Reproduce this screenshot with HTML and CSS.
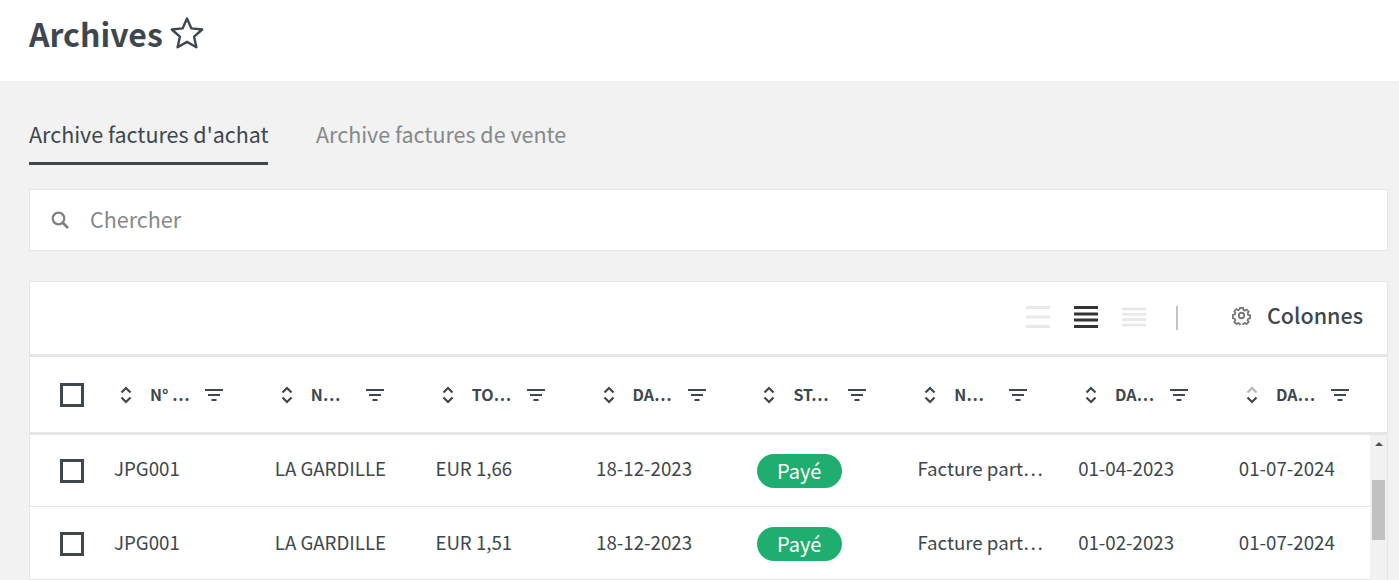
FILE: index.html
```html
<!DOCTYPE html>
<html lang="fr">
<head>
<meta charset="utf-8">
<title>Archives</title>
<link rel="stylesheet" href="styles.css">
</head>
<body>
<svg class="defs" width="0" height="0" aria-hidden="true">
  <symbol id="sort" viewBox="0 0 12 18"><path d="M1.500 6.500 6 2l4.500 4.500M1.500 11.500 6 16l4.500-4.500" fill="none" stroke="currentColor" stroke-width="2.200"/></symbol>
  <symbol id="sort-dim" viewBox="0 0 12 18"><path d="M1.500 6.500 6 2l4.500 4.500" fill="none" stroke="#b5b8ba" stroke-width="2.200"/><path d="M1.500 11.500 6 16l4.500-4.500" fill="none" stroke="currentColor" stroke-width="2.200"/></symbol>
  <symbol id="filter" viewBox="0 0 18 12"><path d="M0 1h18M3 6h12M6.500 11h5" fill="none" stroke="currentColor" stroke-width="2.200"/></symbol>
</svg>
<header class="page-head">
  <h1 class="title">Archives</h1>
  <svg class="star" viewBox="0 0 34 34"><path d="M17 2.500l4.400 9.900 10.800 1.100-8.100 7.200 2.300 10.600L17 25.900l-9.400 5.400 2.300-10.600-8.100-7.200 10.800-1.100z" fill="none" stroke="currentColor" stroke-width="2.400" stroke-linejoin="round"/></svg>
</header>
<main class="content">
  <nav class="tabs">
    <a class="tab tab-active">Archive factures d'achat</a>
    <a class="tab">Archive factures de vente</a>
  </nav>
  <div class="search">
    <svg class="search-icon" viewBox="0 0 18 18"><circle cx="7.500" cy="7.500" r="5.800" fill="none" stroke="currentColor" stroke-width="2.200"/><path d="M11.500 11.500 17 17" stroke="currentColor" stroke-width="2.600"/></svg>
    <span class="search-text">Chercher</span>
  </div>
  <section class="card">
    <div class="toolbar">
      <svg class="density density-off" viewBox="0 0 24 22"><path d="M0 1.500h24M0 11h24M0 20.500h24" stroke="currentColor" stroke-width="3"/></svg>
      <svg class="density density-on" viewBox="0 0 24 22"><path d="M0 1.500h24M0 8h24M0 14h24M0 20.500h24" stroke="currentColor" stroke-width="3"/></svg>
      <svg class="density density-off" viewBox="0 0 24 22"><path d="M0 3h24M0 8.300h24M0 13.600h24M0 19h24" stroke="currentColor" stroke-width="2.600"/></svg>
      <span class="tool-sep"></span>
      <svg class="gear" viewBox="0 0 18 18"><path d="M7.400 1h3.200l.4 2.200 1.500.7 1.900-1.200 2.200 2.300-1.200 1.800.7 1.600 2 .4v3.200l-2 .4-.7 1.500 1.200 1.900-2.200 2.200-1.900-1.200-1.500.7-.4 2.100H7.400l-.4-2.100-1.500-.7-1.900 1.200-2.200-2.200 1.200-1.900-.7-1.500-2-.4V8.300l2-.4.700-1.600-1.200-1.800 2.200-2.300 1.900 1.200 1.500-.7z" transform="translate(.9 .9) scale(.9)" fill="none" stroke="currentColor" stroke-width="1.800"/><circle cx="9" cy="9" r="2.600" fill="none" stroke="currentColor" stroke-width="1.700"/></svg>
      <span class="columns-label">Colonnes</span>
    </div>
    <div class="grid head-row">
      <div class="check-cell"><span class="check"></span></div>
      <div class="th"><svg class="sort"><use href="#sort"/></svg><span class="th-label">N° …</span><svg class="filter"><use href="#filter"/></svg></div>
      <div class="th"><svg class="sort"><use href="#sort"/></svg><span class="th-label">N…</span><svg class="filter"><use href="#filter"/></svg></div>
      <div class="th"><svg class="sort"><use href="#sort"/></svg><span class="th-label">TO…</span><svg class="filter"><use href="#filter"/></svg></div>
      <div class="th"><svg class="sort"><use href="#sort"/></svg><span class="th-label">DA…</span><svg class="filter"><use href="#filter"/></svg></div>
      <div class="th"><svg class="sort"><use href="#sort"/></svg><span class="th-label">ST…</span><svg class="filter"><use href="#filter"/></svg></div>
      <div class="th"><svg class="sort"><use href="#sort"/></svg><span class="th-label">N…</span><svg class="filter"><use href="#filter"/></svg></div>
      <div class="th"><svg class="sort"><use href="#sort"/></svg><span class="th-label">DA…</span><svg class="filter"><use href="#filter"/></svg></div>
      <div class="th"><svg class="sort"><use href="#sort-dim"/></svg><span class="th-label">DA…</span><svg class="filter"><use href="#filter"/></svg></div>
    </div>
    <div class="body-wrap">
      <div class="rows">
        <div class="grid row">
          <div class="check-cell"><span class="check"></span></div>
          <div class="td">JPG001</div><div class="td">LA GARDILLE</div><div class="td">EUR 1,66</div><div class="td">18-12-2023</div>
          <div class="td td-badge"><span class="badge">Payé</span></div>
          <div class="td">Facture part…</div><div class="td">01-04-2023</div><div class="td">01-07-2024</div>
        </div>
        <div class="grid row">
          <div class="check-cell"><span class="check"></span></div>
          <div class="td">JPG001</div><div class="td">LA GARDILLE</div><div class="td">EUR 1,51</div><div class="td">18-12-2023</div>
          <div class="td td-badge"><span class="badge">Payé</span></div>
          <div class="td">Facture part…</div><div class="td">01-02-2023</div><div class="td">01-07-2024</div>
        </div>
      </div>
      <div class="scrollbar">
        <span class="scroll-arrow"></span>
        <span class="scroll-thumb"></span>
      </div>
    </div>
  </section>
</main>
</body>
</html>
```
FILE: styles.css
```css
* { box-sizing: border-box; }
html, body { margin: 0; height: 580px; overflow: hidden; }
body {
  background: #f2f2f2;
  color: #3d474d;
  font-family: "Noto Sans CJK SC", "Noto Sans", sans-serif;
}
.defs { position: absolute; }

.page-head {
  height: 81px;
  background: #fff;
  padding: 13px 0 0 29px;
  display: flex;
  align-items: flex-start;
  gap: 7px;
}
.title { margin: 0; font-size: 32px; line-height: 40px; font-weight: 700; color: #3d474d; }
.star { width: 34px; height: 34px; margin-top: 3px; color: #3d474d; }

.content { padding: 0 11px 0 29px; }
.tabs { display: flex; gap: 48px; height: 84px; padding-top: 37px; }
.tab { display: block; height: 47px; font-size: 21.500px; line-height: 32px; color: #85898b; }
.tab-active { width: 239px; color: #3d474d; border-bottom: 3px solid #3d474d; white-space: nowrap; }

.search {
  height: 62px;
  margin-top: 24px;
  background: #fff;
  border: 1px solid #e6e6e6;
  display: flex;
  align-items: center;
  padding-left: 21px;
}
.search-icon { width: 18px; height: 18px; color: #7f7f7f; }
.search-text { margin: -2px 0 0 21px; font-size: 21.500px; line-height: 30px; color: #85898b; }

.card {
  margin-top: 30px;
  background: #fff;
  border: 1px solid #e6e6e6;
  border-bottom: 0;
}
.toolbar {
  height: 75px;
  border-bottom: 3px solid #e6e6e6;
  display: flex;
  align-items: center;
  justify-content: flex-end;
  padding-right: 24px;
}
.density { width: 24px; height: 22px; margin: 0 24px 3px 0; }
.density-off { color: #e8e8e8; }
.density-on { color: #333; }
.tool-sep { width: 2px; height: 24px; background: #c4c4c4; margin: 0 54px 0 6px; }
.gear { width: 19px; height: 19px; color: #757575; margin: 0 16px 6px 0; }
.columns-label { margin-bottom: 6px; font-size: 21.500px; line-height: 30px; font-weight: 500; color: #3d474d; }

.grid { display: grid; grid-template-columns: 84px repeat(8, 160.700px); }
.check-cell { padding: 1px 0 0 30px; display: flex; align-items: center; }
.check { display: block; width: 24px; height: 24px; border: 3px solid #3d474d; }

.head-row { height: 78px; border-bottom: 3px solid #e6e6e6; grid-template-columns: 84px repeat(8, 160.850px); }
.head-row .check-cell { padding-top: 0; }
.th { display: flex; align-items: center; padding-left: 6px; color: #3d474d; }
.sort { width: 12px; height: 18px; flex: none; }
.th-label {
  width: 55px;
  margin: -1px 0 0 18px;
  font-size: 16px;
  line-height: 22px;
  font-weight: 700;
  white-space: nowrap;
}
.filter { width: 18px; height: 12px; flex: none; margin-top: 1px; }

.body-wrap { display: flex; height: 147px; overflow: hidden; }
.rows { width: 1340px; overflow: hidden; }
.row { height: 73px; border-bottom: 1px solid #e6e6e6; }
.row:first-child { height: 72px; }
.td {
  display: flex;
  align-items: center;
  font-size: 18.700px;
  line-height: 28px;
  color: #3d474d;
  white-space: nowrap;
  padding-bottom: 3px;
}
.row:first-child .td { padding-bottom: 6px; }
.row .td-badge, .row:first-child .td-badge { padding-bottom: 0; }
.badge {
  display: block;
  width: 85px;
  height: 34px;
  margin-top: 2px;
  border-radius: 17px;
  background: #1fae6f;
  color: #fff;
  font-size: 20px;
  line-height: 33px;
  text-align: center;
}
.row:first-child .badge { margin-top: 0; }
.scrollbar {
  position: relative;
  flex: 1;
  background: #f1f1f1;
}
.scroll-arrow {
  position: absolute;
  left: 5px;
  top: 7px;
  border-left: 4px solid transparent;
  border-right: 4px solid transparent;
  border-bottom: 4px solid #505050;
}
.scroll-thumb {
  position: absolute;
  left: 2px;
  top: 45px;
  width: 13px;
  height: 60px;
  background: #c1c1c1;
}
```
